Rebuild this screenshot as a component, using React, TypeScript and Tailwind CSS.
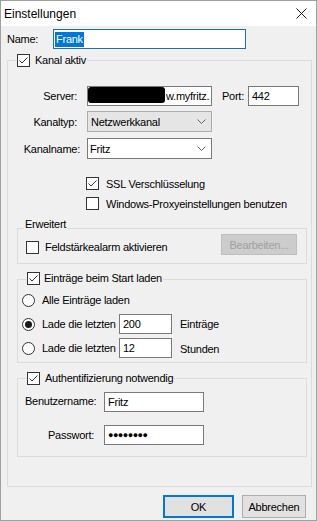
import React from "react";

const font = { fontFamily: '"Liberation Sans", Arial, sans-serif' };

function Check({ checked }: { checked?: boolean }) {
  return (
    <span className="w-[13px] h-[13px] border border-[#333333] bg-white flex items-center justify-center shrink-0">
      {checked && (
        <svg width="11" height="11" viewBox="0 0 11 11">
          <path d="M1.5 5.5 L4 8 L9.5 2.5" fill="none" stroke="#333333" strokeWidth="1" />
        </svg>
      )}
    </span>
  );
}

function Radio({ checked }: { checked?: boolean }) {
  return (
    <span className="w-[13px] h-[13px] rounded-full border border-[#333333] bg-white flex items-center justify-center shrink-0">
      {checked && <span className="w-[7px] h-[7px] rounded-full bg-[#1a1a1a]" />}
    </span>
  );
}

function Chevron() {
  return (
    <svg width="9" height="5" viewBox="0 0 9 5">
      <path d="M0.5 0.5 L4.5 4.5 L8.5 0.5" fill="none" stroke="#606060" strokeWidth="1" />
    </svg>
  );
}

function TextBox({ w, children }: { w: string; children?: React.ReactNode }) {
  return (
    <div className={`${w} h-[20px] border border-[#7a7a7a] bg-white flex items-center pl-[3px] overflow-hidden whitespace-nowrap`}>
      {children}
    </div>
  );
}

export default function App() {
  return (
    <div
      className="w-[317px] h-[521px] bg-[#f0f0f0] border border-[#a0a0a0] text-[11px] tracking-[-0.25px] text-black leading-[14px] overflow-hidden whitespace-nowrap"
      style={font}
    >
      {/* Title bar */}
      <div className="h-[25px] bg-white flex items-center justify-between pl-[3px] pr-[9px]">
        <span className="text-[12px] tracking-normal">Einstellungen</span>
        <svg width="11" height="11" viewBox="0 0 11 11">
          <path d="M0.5 0.5 L10.5 10.5 M10.5 0.5 L0.5 10.5" stroke="#1a1a1a" strokeWidth="1" />
        </svg>
      </div>

      <div className="pl-[6px]">
        {/* Name row */}
        <div className="mt-[3px] flex items-center h-[20px]">
          <span className="w-[46px]">Name:</span>
          <div className="w-[193px] h-[20px] border border-[#1f6fa8] bg-white flex items-center pl-[1px]">
            <span className="bg-[#0078d7] text-white px-[1px] leading-[15px]">Frank</span>
          </div>
        </div>

        {/* Kanal aktiv group */}
        <div className="relative mt-[11px] w-[305px] h-[427px] border border-[#dcdcdc]">
          <div className="absolute left-[8px] top-[-8px] h-[14px] flex items-center gap-[5px] bg-[#f0f0f0] px-[1px]">
            <Check checked />
            <span>Kanal aktiv</span>
          </div>

          {/* Server */}
          <div className="mt-[25px] flex items-center h-[20px]">
            <span className="w-[69px] text-right">Server:</span>
            <div className="ml-[10px] w-[125px] h-[20px] border border-[#7a7a7a] bg-white flex items-start overflow-hidden">
              <span className="w-[77px] h-[16px] bg-black rounded-[3px] shrink-0" />
              <span className="self-center ml-[1px]">w.myfritz.</span>
            </div>
            <span className="ml-[10px] w-[26px]">Port:</span>
            <TextBox w="w-[51px]">442</TextBox>
          </div>

          {/* Kanaltyp */}
          <div className="mt-[5px] flex items-center h-[21px]">
            <span className="w-[69px] text-right">Kanaltyp:</span>
            <div className="ml-[10px] w-[125px] h-[21px] border border-[#adadad] bg-[#e5e5e5] flex items-center justify-between pl-[3px] pr-[5px]">
              <span>Netzwerkkanal</span>
              <Chevron />
            </div>
          </div>

          {/* Kanalname */}
          <div className="mt-[6px] flex items-center h-[21px]">
            <span className="w-[72px] text-right">Kanalname:</span>
            <div className="ml-[7px] w-[125px] h-[21px] border border-[#7a7a7a] bg-white flex items-center justify-between pl-[2px] pr-[5px]">
              <span>Fritz</span>
              <Chevron />
            </div>
          </div>

          {/* SSL */}
          <div className="mt-[17px] ml-[78px] flex items-center h-[15px] gap-[7px]">
            <Check checked />
            <span>SSL Verschlüsselung</span>
          </div>
          <div className="mt-[5px] ml-[78px] flex items-center h-[15px] gap-[7px]">
            <Check />
            <span>Windows-Proxyeinstellungen benutzen</span>
          </div>

          {/* Erweitert */}
          <div className="relative mt-[17px] ml-[9px] w-[290px] h-[36px] border border-[#dcdcdc]">
            <div className="absolute left-[6px] top-[-12px] bg-[#f0f0f0] px-[1px] leading-[14px]">Erweitert</div>
            <div className="flex items-start justify-between pl-[8px] pr-[9px] mt-[5px]">
              <div className="mt-[6px] flex items-center gap-[6px]">
                <Check />
                <span>Feldstärkealarm aktivieren</span>
              </div>
              <div className="w-[76px] h-[21px] bg-[#cccccc] border border-[#bfbfbf] flex items-center justify-center text-[#a0a0a0]">
                Bearbeiten...
              </div>
            </div>
          </div>

          {/* Einträge */}
          <div className="relative mt-[15px] ml-[9px] w-[290px] h-[84px] border border-[#dcdcdc]">
            <div className="absolute left-[8px] top-[-9px] h-[14px] flex items-center gap-[4px] bg-[#f0f0f0] px-[1px]">
              <Check checked />
              <span>Einträge beim Start laden</span>
            </div>
            <div className="mt-[10px] pl-[4px] flex items-center h-[20px]">
              <Radio />
              <span className="ml-[7px]">Alle Einträge laden</span>
            </div>
            <div className="mt-[4px] pl-[4px] flex items-center h-[20px]">
              <Radio checked />
              <span className="ml-[7px] w-[77px]">Lade die letzten</span>
              <TextBox w="w-[53px]">200</TextBox>
              <span className="ml-[8px]">Einträge</span>
            </div>
            <div className="mt-[4px] pl-[4px] flex items-center h-[20px]">
              <Radio />
              <span className="ml-[7px] w-[77px]">Lade die letzten</span>
              <TextBox w="w-[53px]">12</TextBox>
              <span className="ml-[8px] mt-[2px]">Stunden</span>
            </div>
          </div>

          {/* Auth */}
          <div className="relative mt-[15px] ml-[9px] w-[290px] h-[79px] border border-[#dcdcdc]">
            <div className="absolute left-[8px] top-[-8px] h-[14px] flex items-center gap-[5px] bg-[#f0f0f0] px-[1px]">
              <Check checked />
              <span>Authentifizierung notwendig</span>
            </div>
            <div className="mt-[13px] pl-[7px] flex items-center h-[20px]">
              <span className="w-[79px] mb-[2px]">Benutzername:</span>
              <TextBox w="w-[100px]">Fritz</TextBox>
            </div>
            <div className="mt-[13px] pl-[30px] flex items-center h-[20px]">
              <span className="w-[56px]">Passwort:</span>
              <TextBox w="w-[100px]">
                <span className="text-[9px] tracking-[-0.5px]">●●●●●●●●</span>
              </TextBox>
            </div>
          </div>
        </div>
      </div>

      {/* Buttons */}
      <div className="mt-[8px] flex justify-end gap-[8px] pr-[10px]">
        <div className="w-[71px] h-[23px] border-2 border-[#0078d7] bg-[#e1e1e1] flex items-center justify-center">OK</div>
        <div className="w-[64px] h-[23px] border border-[#adadad] bg-[#e1e1e1] flex items-center justify-center">Abbrechen</div>
      </div>
    </div>
  );
}
